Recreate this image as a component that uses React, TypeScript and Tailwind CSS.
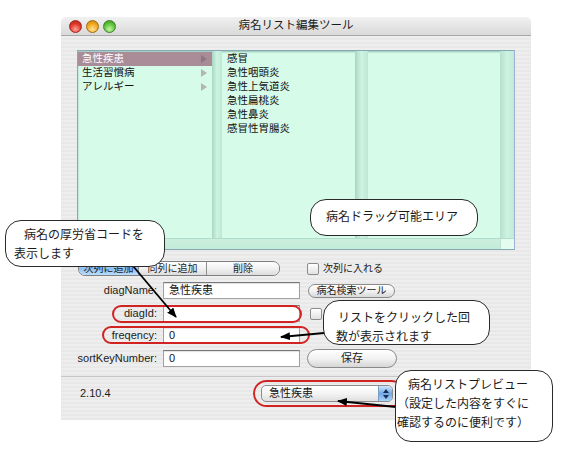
import React from "react";

const SANS = "font-['Liberation_Sans','Noto_Sans_CJK_JP',sans-serif]";

const groups = ["急性疾患", "生活習慣病", "アレルギー"];
const diseases = ["感冒", "急性咽頭炎", "急性上気道炎", "急性扁桃炎", "急性鼻炎", "感冒性胃腸炎"];

function Arrowhead({ color }: { color: string }) {
  return (
    <svg width="6" height="8" viewBox="0 0 6 8" className="shrink-0">
      <path d="M0 0 L6 4 L0 8 Z" fill={color} />
    </svg>
  );
}

function Checkbox() {
  return (
    <div className="w-[12px] h-[12px] shrink-0 rounded-[2px] border border-[#8c8c8c] bg-linear-to-b from-white to-[#e2e2e2] shadow-[inset_0_1px_1px_rgba(255,255,255,0.9)]" />
  );
}

function Field({ value }: { value?: string }) {
  return (
    <div className="ml-[6px] w-[137px] h-[17px] flex items-center pl-[5px] bg-white border border-[#a2a2a2] border-t-[#777] shadow-[inset_0_1px_1px_rgba(0,0,0,0.12)] text-[11px] text-[#111]">
      {value}
    </div>
  );
}

function Label({ children }: { children: React.ReactNode }) {
  return <div className="w-[96px] text-right text-[11px] text-[#1c1c1c] leading-none">{children}</div>;
}

function Callout({ className, children }: { className: string; children: React.ReactNode }) {
  return (
    <div
      className={
        "absolute bg-white border border-[#2a2a2a] rounded-[16px] text-[12px] leading-[19px] text-[#1a1a1a] " + className
      }
    >
      {children}
    </div>
  );
}

function Browser() {
  return (
    <div className="ml-[16px] mt-[14px] w-[438px] h-[200px] flex flex-col border border-[#86a9b6] border-r-[#9db2d6] bg-[#d7fbe9] shadow-[inset_0_1px_2px_rgba(20,80,80,0.35)]">
      <div className="flex h-[187px]">
        <div className="w-[134px] pt-[1px]">
          {groups.map((g, i) => (
            <div
              key={g}
              className={
                "h-[14px] flex items-center justify-between pl-[4px] pr-[5px] text-[10.5px] " +
                (i === 0 ? "bg-[#a98c98] text-white" : "text-[#111]")
              }
            >
              <span>{g}</span>
              <Arrowhead color={i === 0 ? "#8d7882" : "#b4b4b4"} />
            </div>
          ))}
        </div>
        <div className="w-[10px] bg-linear-to-r from-[#aad6c3] via-[#cef4e3] to-[#bde7d4]" />
        <div className="w-[133px] pt-[1px]">
          {diseases.map((d) => (
            <div key={d} className="h-[14px] flex items-center pl-[5px] text-[10.5px] text-[#111]">
              {d}
            </div>
          ))}
        </div>
        <div className="w-[13px] bg-linear-to-r from-[#aad6c3] via-[#cef4e3] to-[#bde7d4]" />
        <div className="w-[132px]" />
        <div className="w-[14px] bg-linear-to-r from-[#b5e0cd] via-[#cdf2e1] to-[#c2ead8]" />
      </div>
      <div className="flex flex-1 border-t border-[#b2dccb] bg-linear-to-b from-[#cbefdf] to-[#c3ead8]">
        <div className="flex-1" />
        <div className="w-[14px] bg-[#e4fbf0] border-l border-[#bfe3d3]" />
      </div>
    </div>
  );
}

export default function App() {
  return (
    <div className={"relative w-[566px] h-[463px] overflow-hidden bg-white pt-[17px] " + SANS}>
      {/* window */}
      <div className="ml-[61px] w-[470px] h-[403px] flex flex-col rounded-t-[5px] overflow-hidden">
        <div className="h-[19px] grid grid-cols-[1fr_auto_1fr] items-center bg-linear-to-b from-[#f1f1f1] to-[#d9d9d9] border-b border-[#a8a8a8]">
          <div className="flex gap-[4px] pl-[8px]">
            <div className="w-[13px] h-[13px] rounded-full border border-[#9b2820] bg-[radial-gradient(circle_at_50%_75%,#ffa395,#e0382c_55%,#b0241b)]" />
            <div className="w-[13px] h-[13px] rounded-full border border-[#a06d12] bg-[radial-gradient(circle_at_50%_75%,#ffe29a,#f3a81c_55%,#c07d0c)]" />
            <div className="w-[13px] h-[13px] rounded-full border border-[#3d7f25] bg-[radial-gradient(circle_at_50%_75%,#c6f5a6,#5ec33c_55%,#3d8f22)]" />
          </div>
          <div className="text-[11.5px] text-[#1a1a1a]">病名リスト編集ツール</div>
          <div />
        </div>

        <div className="flex-1 flex flex-col bg-[image:repeating-linear-gradient(180deg,#eeeeee_0px,#eeeeee_2px,#e8e8e8_2px,#e8e8e8_4px)]">
          <Browser />

          {/* segmented buttons + checkbox */}
          <div className="mt-[11px] h-[15px] flex items-center">
            <div className="ml-[17px] w-[202px] h-[15px] flex rounded-[7px] border border-[#7f7f7f] overflow-hidden text-[10px] text-[#1a1a1a]">
              <div className="w-[59px] flex items-center justify-center bg-linear-to-b from-[#d3e9fc] via-[#8fc1f1] to-[#b9ddfb]">
                次列に追加
              </div>
              <div className="w-[68px] flex items-center justify-center border-l border-[#8f8f8f] bg-linear-to-b from-white via-[#f1f1f1] to-[#dcdcdc]">
                同列に追加
              </div>
              <div className="flex-1 flex items-center justify-center border-l border-[#8f8f8f] bg-linear-to-b from-white via-[#f1f1f1] to-[#dcdcdc]">
                削除
              </div>
            </div>
            <div className="ml-[27px] flex items-center gap-[4px] text-[10px] text-[#1a1a1a]">
              <Checkbox />
              <span>次列に入れる</span>
            </div>
          </div>

          {/* form rows */}
          <div className="mt-[6px] h-[17px] flex items-center">
            <Label>diagName:</Label>
            <Field value="急性疾患" />
            <div className="ml-[8px] w-[87px] h-[14px] rounded-full border border-[#8a8a8a] bg-linear-to-b from-white via-[#f2f2f2] to-[#d8d8d8] flex items-center justify-center text-[10px] text-[#1a1a1a]">
              病名検索ツール
            </div>
          </div>
          <div className="mt-[6px] h-[17px] flex items-center">
            <Label>diagId:</Label>
            <Field />
            <div className="ml-[10px]">
              <Checkbox />
            </div>
          </div>
          <div className="mt-[5px] h-[17px] flex items-center">
            <Label>freqency:</Label>
            <Field value="0" />
          </div>
          <div className="mt-[6px] h-[17px] flex items-center">
            <Label>sortKeyNumber:</Label>
            <Field value="0" />
            <div className="ml-[7px] w-[90px] h-[19px] rounded-full border border-[#8a8a8a] bg-linear-to-b from-white via-[#f2f2f2] to-[#d6d6d6] flex items-center justify-center text-[11px] text-[#1a1a1a]">
              保存
            </div>
          </div>

          <div className="mt-[9px] h-[1px] bg-[#c6c6c6]" />

          <div className="mt-[8px] h-[17px] flex items-center">
            <div className="w-[200px] pl-[19px] text-[11px] text-[#1c1c1c]">2.10.4</div>
            <div className="w-[132px] h-[17px] flex rounded-[5px] border border-[#8d8d8d] overflow-hidden bg-linear-to-b from-white via-[#f4f4f4] to-[#dedede]">
              <div className="flex-1 flex items-center pl-[7px] text-[11px] text-[#111]">急性疾患</div>
              <div className="w-[14px] flex flex-col items-center justify-center gap-[2px] bg-linear-to-b from-[#cfe6fb] via-[#6fa9e6] to-[#a9d3fa] border-l border-[#7a9cc2]">
                <svg width="6" height="4" viewBox="0 0 6 4">
                  <path d="M0 4 L3 0 L6 4 Z" fill="#1b2f55" />
                </svg>
                <svg width="6" height="4" viewBox="0 0 6 4">
                  <path d="M0 0 L3 4 L6 0 Z" fill="#1b2f55" />
                </svg>
              </div>
            </div>
          </div>
          <div className="flex-1" />
        </div>
      </div>

      {/* red highlight rings */}
      <div className="absolute left-[112px] top-[305px] w-[190px] h-[18px] rounded-full border-2 border-[#d22323]" />
      <div className="absolute left-[102px] top-[326px] w-[208px] h-[18px] rounded-full border-2 border-[#d22323]" />
      <div className="absolute left-[253px] top-[380px] w-[152px] h-[27px] rounded-full border-2 border-[#d22323]" />

      {/* pointer arrows */}
      <svg className="absolute inset-0 pointer-events-none" width="566" height="463" viewBox="0 0 566 463">
        <defs>
          <marker id="head" markerUnits="userSpaceOnUse" markerWidth="10" markerHeight="8" refX="9" refY="4" orient="auto">
            <path d="M0 0 L10 4 L0 8 Z" fill="#000" />
          </marker>
        </defs>
        <line x1="133" y1="266" x2="176" y2="317" stroke="#000" strokeWidth="1.8" markerEnd="url(#head)" />
        <line x1="324" y1="333" x2="281" y2="337" stroke="#000" strokeWidth="1.8" markerEnd="url(#head)" />
        <line x1="396" y1="407" x2="338" y2="401" stroke="#000" strokeWidth="1.8" markerEnd="url(#head)" />
      </svg>

      {/* callouts */}
      <Callout className="left-[310px] top-[199px] w-[168px] h-[37px] pl-[15px] flex items-center">
        病名ドラッグ可能エリア
      </Callout>
      <Callout className="left-[5px] top-[220px] w-[160px] h-[47px] pl-[8px] pt-[5px]">
        <div className="pl-[10px]">病名の厚労省コードを</div>
        <div>表示します</div>
      </Callout>
      <Callout className="left-[323px] top-[300px] w-[167px] h-[45px] pl-[12px] pt-[8px]">
        <div className="pl-[2px]">リストをクリックした回</div>
        <div>数が表示されます</div>
      </Callout>
      <Callout className="left-[395px] top-[370px] w-[158px] h-[72px] pl-[1px] pt-[5px]">
        <div className="pl-[11px]">病名リストプレビュー</div>
        <div>（設定した内容をすぐに</div>
        <div>確認するのに便利です）</div>
      </Callout>
    </div>
  );
}
